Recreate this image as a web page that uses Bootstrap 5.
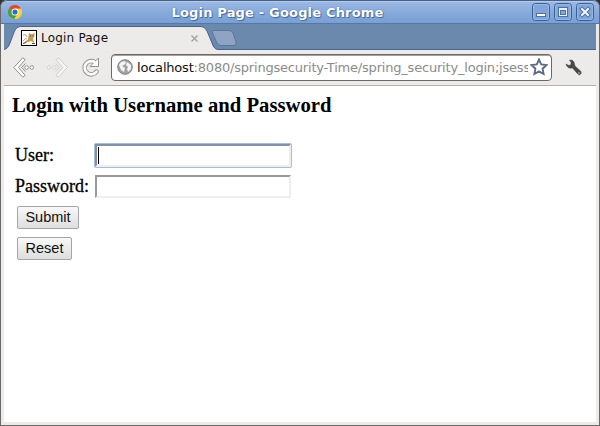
<!DOCTYPE html>
<html lang="en">
<head>
<meta charset="utf-8">
<title>Login Page</title>
<link href="https://cdn.jsdelivr.net/npm/bootstrap@5.3.0/dist/css/bootstrap.min.css" rel="stylesheet">
<script src="https://cdn.jsdelivr.net/npm/bootstrap@5.3.0/dist/js/bootstrap.bundle.min.js" defer></script>
<style>
body{background:#333;width:600px;height:426px}
.window{width:600px;height:426px;background:#edebe9;border:1px solid #6b6967;border-top:0;border-radius:7px 7px 0 0}
.titlebar{height:24px;margin:0 -1px;padding:0 5px 0 6px;background:linear-gradient(#9db9e4,#86a9da 55%,#7a9fd3);border:1px solid #3f5f8f;border-top-color:#47618b;border-bottom-color:#5578ab;border-radius:7px 7px 0 0;box-shadow:inset 0 1px #b4caea}
.caption{font:bold 13px "DejaVu Sans",sans-serif;color:#fff;text-shadow:0 0 1px #30588f,1px 1px 1px #4169a0;letter-spacing:.18px}
.wbtns{gap:4px}
.wbtn{display:block;width:18px;height:18px}
.frame{margin:0 3px}
.tabs{height:26px;background:#6b89ad}
.tabs svg.shape{left:0;top:0}
.tabrow{height:28px;padding-left:17px}
.tabtext{font:12px/16px "DejaVu Sans",sans-serif;color:#111;letter-spacing:.2px;margin-left:4px;width:149px}
.toolbar{height:36px;padding:0 14px 1px 9px;border-bottom:1px solid #b3b1af;background:#edebea}
.navicons{margin:2px 2px 0 0}
.omni{width:441px;height:27px;border:1px solid #6c6866;border-radius:4px;background:#fff;padding:0 3px 0 5px;box-shadow:inset 0 1px #a5a19f}
.url{font:13px/20px "DejaVu Sans",sans-serif;color:#8b8b8b;width:391px;margin:1px 2px 0 4px;white-space:nowrap;letter-spacing:-.2px}
.url b{font-weight:400;color:#111}
.page{height:336px;background:#fff;color:#000;padding:7px 8px;font-family:"Liberation Serif",serif}
.page h1{font-size:20.7px;line-height:24px;font-weight:700;margin:0 0 23px}
.field{height:31px;padding-left:3px}
.field label{width:80px;font-size:18px;line-height:20px;-webkit-text-stroke:.3px #000;padding-bottom:1px}
.field input{width:196px;height:23px;border:2px solid;border-color:#999 #eee #eee #999;padding:0 1px;outline:0;background:#fff;font:15px "Liberation Sans",sans-serif}
.field input.active{box-shadow:0 0 0 1px #a9bdd9;border-color:#8291a6 #eee #eee #8291a6;border-radius:1px}
.caret{left:86px;top:7px;width:1px;height:17px;background:#000}
.push{height:23px;border:1px solid #a5a5a5;border-radius:2px;background:linear-gradient(#f8f8f8,#dedede);font:14.5px/19px "Liberation Sans",sans-serif;color:#111;padding:0;margin:0 0 8px 5px;display:block}
.submit{width:62px;margin-top:4px}.reset{width:55px}
</style>
</head>
<body class="m-0 overflow-hidden">
<div class="window overflow-hidden">
  <header class="titlebar d-flex align-items-center">
    <svg width="16" height="16" viewBox="0 0 16 16"><circle cx="8" cy="8" r="7" fill="#efce34"/><path d="M8 8L2 4.200A7 7 0 0 1 14.200 4.800H8z" fill="#d94a3b"/><path d="M8 8L2 4.200A7 7 0 0 0 7.400 15L10.500 10z" fill="#44a050"/><path d="M8 4.800h6.200A7 7 0 0 1 7.400 15l3.400-5.600z" fill="#f3d23c"/><circle cx="8" cy="8" r="3.500" fill="#fff"/><circle cx="8" cy="8" r="2.600" fill="#2d70bd"/></svg>
    <div class="caption flex-grow-1 text-center">Login Page - Google Chrome</div>
    <div class="wbtns d-flex">
      <svg class="wbtn" viewBox="0 0 18 18"><rect x=".5" y=".5" width="17" height="17" rx="3" fill="#83a6d8" stroke="#385f96"/><rect x="1.500" y="1.500" width="15" height="15" rx="2" fill="none" stroke="#9ab7e1"/><rect x="4.500" y="10.500" width="9" height="3" fill="#fff" stroke="#4a70a8"/></svg>
      <svg class="wbtn" viewBox="0 0 18 18"><rect x=".5" y=".5" width="17" height="17" rx="3" fill="#83a6d8" stroke="#385f96"/><rect x="1.500" y="1.500" width="15" height="15" rx="2" fill="none" stroke="#9ab7e1"/><rect x="4.500" y="4.500" width="9" height="9" fill="#e9f0fa" stroke="#4a70a8"/><rect x="6.500" y="7.500" width="5" height="4" fill="#83a6d8" stroke="#4a70a8"/></svg>
      <svg class="wbtn" viewBox="0 0 18 18"><rect x=".5" y=".5" width="17" height="17" rx="3" fill="#83a6d8" stroke="#385f96"/><rect x="1.500" y="1.500" width="15" height="15" rx="2" fill="none" stroke="#9ab7e1"/><path d="M6 6l6 6M12 6l-6 6" stroke="#4a70a8" stroke-width="4" stroke-linecap="square"/><path d="M6 6l6 6M12 6l-6 6" stroke="#f4f8fd" stroke-width="2" stroke-linecap="square"/></svg>
    </div>
  </header>
  <div class="frame">
    <nav class="tabs position-relative">
      <svg class="shape position-absolute" width="592" height="26" viewBox="0 0 592 26"><path d="M0 25.500C3 25 4.500 23 6 19L10.500 7Q12.500 2.500 16 2.500H197Q201 2.500 203 7L208 19Q210 25.500 214 25.500H592V26H0z" fill="#edebea"/><path d="M0 25.500C3 25 4.500 23 6 19L10.500 7Q12.500 2.500 16 2.500H197Q201 2.500 203 7L208 19Q210 25.500 214 25.500H592" fill="none" stroke="#48648b"/><path d="M210 6.500H225Q228 6.500 229 9L232 18Q233 21.500 230 21.500H217Q214 21.500 212.500 18L208.500 9Q207.500 6.500 210 6.500z" fill="#8fa4c4" stroke="#56779f"/></svg>
      <div class="tabrow position-relative d-flex align-items-center">
        <svg width="16" height="16" viewBox="0 0 16 16"><rect x=".5" y=".5" width="15" height="15" fill="#fff" stroke="#000"/><path d="M2 5q3-2 4 2M2 11q3-4 4-2" fill="none" stroke="#aaa"/><path d="M7.500 6L8 2.500 9.500 4H12l1.500-1.500v4L12 8l1 5-3-2-3 1-4 1.500 1-2 3-2z" fill="#c99b4e"/><path d="M2 13.500l3-1m6 1h3M9 6h.8m1.700 0h.8" stroke="#555"/></svg>
        <span class="tabtext">Login Page</span>
        <svg width="9" height="9" viewBox="0 0 9 9"><path d="M1.500 1.500l6 6M7.500 1.500l-6 6" stroke="#a3a19f" stroke-width="1.400"/></svg>
      </div>
    </nav>
    <div class="toolbar d-flex align-items-center">
      <svg class="navicons" width="96" height="24" viewBox="0 0 96 24">
        <g fill="#fff" stroke="#92908e" stroke-linejoin="round"><path d="M9.800 1.800l2.400 1.800-6.700 7.900 6.700 7.900-2.400 1.800L.8 11.500z"/><path d="M12.500 7.500l-3.800 4 3.800 4" fill="none"/><circle cx="13.600" cy="11.500" r="1.800"/><circle cx="18.800" cy="11.500" r="1.800"/></g>
        <g fill="#f6f5f4" stroke="#d2d0ce" stroke-linejoin="round"><path d="M45.400 1.800L43 3.600l6.700 7.900-6.700 7.900 2.400 1.800 9-9.700z"/><path d="M42.700 7.500l3.800 4-3.800 4" fill="none"/><circle cx="36" cy="11.500" r="1.700"/><circle cx="41.200" cy="11.500" r="1.700"/></g>
        <path d="M81.500 6A6.600 6.600 0 1 0 83.500 15.700" fill="none" stroke="#92908e" stroke-width="4.600" stroke-linecap="round"/><path d="M85.500 2v8.500h-8.500z" fill="#fff" stroke="#92908e" stroke-linejoin="round"/><path d="M81.500 6A6.600 6.600 0 1 0 83.500 15.700" fill="none" stroke="#fbfbfa" stroke-width="2.700" stroke-linecap="round"/>
      </svg>
      <div class="omni d-flex align-items-center">
        <svg class="flex-shrink-0" width="16" height="16" viewBox="0 0 16 16"><circle cx="8" cy="8" r="7.300" fill="#a2a2a2" stroke="#828282"/><path d="M2 6l2-3 4-1 1 2-2 2-2 1 3 2-1 4-3-2zM10 3l4 3v4l-3 3-1-3 1-2-2-2z" fill="#f4f4f4"/></svg>
        <div class="url overflow-hidden flex-shrink-0"><b>localhost</b>:8080/springsecurity-Time/spring_security_login;jsess</div>
        <svg class="flex-shrink-0" width="18" height="18" viewBox="0 0 18 18"><path d="M9 1.500l2.200 4.900 5.300.6-3.900 3.700 1 5.300L9 13.400 4.400 16l1-5.300L1.500 7l5.300-.6z" fill="#fff" stroke="#5d6b8b" stroke-width="1.900"/></svg>
      </div>
      <svg class="ms-auto" width="17" height="17" viewBox="0 0 17 17"><path d="M4.500 1Q9 .5 9.500 5L10 7l6 5.500q1 2-1 3.200-1.500.5-2.500-1L7.500 9Q2 10 1 5l3 1.500L6 5.500 6 3.500z" fill="#484848" stroke="#484848" stroke-width=".5"/><circle cx="14" cy="14" r=".8" fill="#ccc"/></svg>
    </div>
    <main class="page">
      <h1>Login with Username and Password</h1>
      <form>
        <div class="field position-relative d-flex align-items-center"><label for="user">User:</label><input class="active" id="user" type="text"><span class="caret position-absolute"></span></div>
        <div class="field d-flex align-items-center"><label for="pass">Password:</label><input id="pass" type="password"></div>
        <button class="push submit" type="button">Submit</button>
        <button class="push reset" type="button">Reset</button>
      </form>
    </main>
  </div>
</div>
</body>
</html>
